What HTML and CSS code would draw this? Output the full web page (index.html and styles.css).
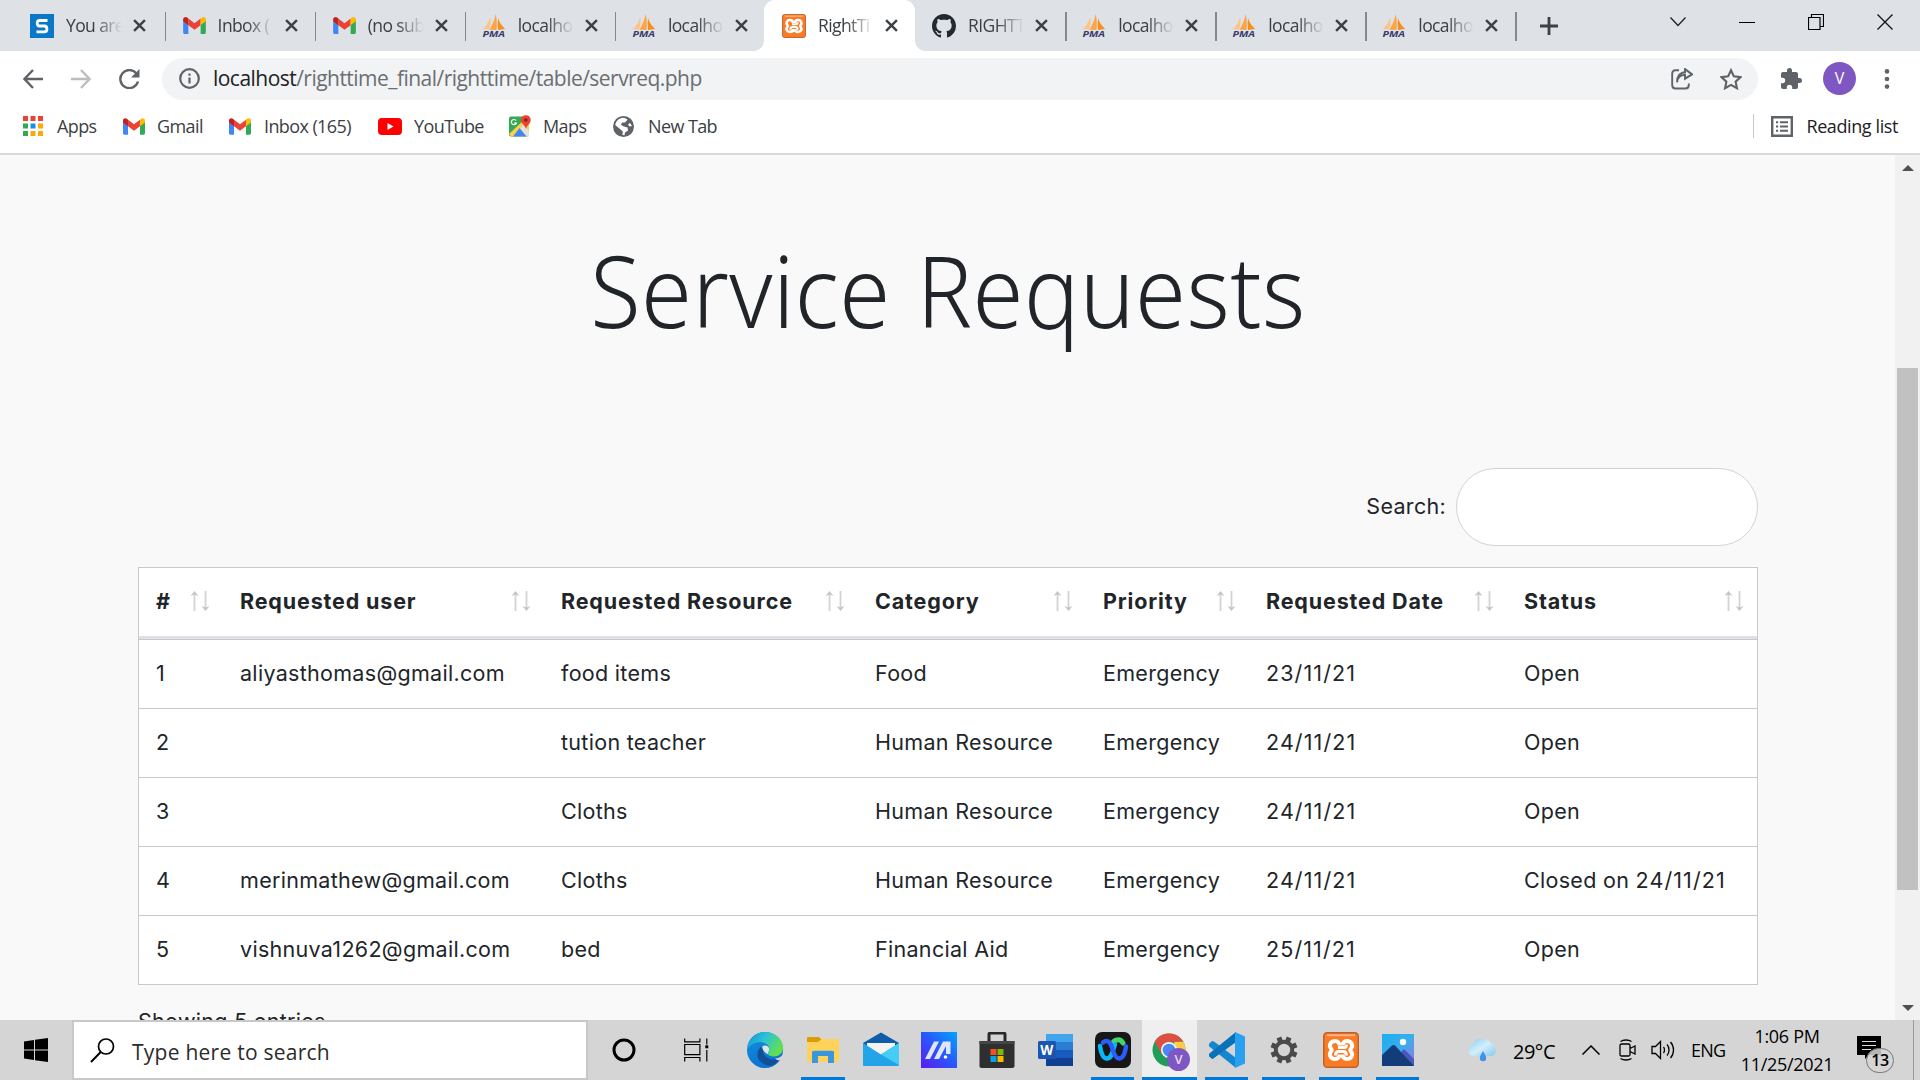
FILE: index.html
```html
<!DOCTYPE html>
<html lang="en">
<head>
<meta charset="utf-8">
<title>RightTime</title>
<link rel="stylesheet" href="styles.css">
</head>
<body>
<svg class="defs" aria-hidden="true">
  <defs>
    <linearGradient id="edgeTop" x1="0" y1="0" x2="1" y2=".5"><stop offset="0" stop-color="#0c8fd8"/><stop offset=".5" stop-color="#2cc3d5"/><stop offset="1" stop-color="#63e04e"/></linearGradient>
    <linearGradient id="edgeLow" x1="0" y1="0" x2=".6" y2="1"><stop offset="0" stop-color="#1491dc"/><stop offset="1" stop-color="#0a6fd0"/></linearGradient>
    <linearGradient id="armoury" x1="0" y1="1" x2="1" y2="0"><stop offset="0" stop-color="#5a1cf0"/><stop offset=".5" stop-color="#2b56fa"/><stop offset="1" stop-color="#02a5ff"/></linearGradient>
    <linearGradient id="cloud" x1="0" y1="0" x2="1" y2="1"><stop offset="0" stop-color="#86cdf2"/><stop offset=".5" stop-color="#d3effc"/><stop offset="1" stop-color="#82c6ef"/></linearGradient>
    <linearGradient id="photo" x1="0" y1="0" x2="1" y2="1"><stop offset="0" stop-color="#1aaef0"/><stop offset=".5" stop-color="#38aef0"/><stop offset="1" stop-color="#9a74dc"/></linearGradient>
  </defs>
  <symbol id="pma" viewBox="0 0 24 24"><path d="M8 3C7 8 4 12 1 15l6 .6C9 11 9 7 8 3z" fill="#fbc48a"/><path d="M13.500 0C13 6 10 11 7.500 15.800l7 .2C15 10 15 5 13.500 0z" fill="#fca448"/><path d="M16 4c1 4 4 8 7 11l-7 1c-.5-4-.5-8 0-12z" fill="#f78f1e"/><text x=".5" y="22.500" class="pma-word" textLength="22.500" lengthAdjust="spacingAndGlyphs">PMA</text></symbol>
  <symbol id="gmail" viewBox="0 0 24 18"><path d="M0 3v13.400C0 17.300.7 18 1.600 18H5.500V8z" fill="#4285f4"/><path d="M24 3v13.400c0 .9-.7 1.600-1.600 1.600h-3.900V8z" fill="#34a853"/><path d="M5.500 1.500 12 6.500l6.500-5V8.700L12 13.500 5.500 8.700z" fill="#ea4335"/><path d="M0 2.500C0 .3 2.500-.7 4.200.600L5.500 1.500V8.700L0 4.600z" fill="#c5221f"/><path d="M24 2.500c0-2.200-2.500-3.200-4.200-1.900l-1.300.9v7.200L24 4.600z" fill="#fbbc04"/></symbol>
  <symbol id="xampp" viewBox="0 0 36 36"><rect x=".7" y=".7" width="34.600" height="34.600" rx="3.500" fill="#fb7a24" stroke="#b9622a" stroke-width="1.400"/><path d="M4 2.300h28v1.900H4z" fill="#ffb588"/><path d="M15 15.500h6c2 0 2.500-1.500 2.500-3M12.500 23.500c0-2.500 1-4 3-4h5c2 0 3 1.500 3 4" fill="none" stroke="#fff" stroke-width="3"/><path d="M12 9c-4.500 0-6.500 4.500-4 7.500 1 1.200 1 1.800 0 3-2.500 3-.5 7.500 4 7.500 3 0 4.500-2 4.500-4.500M24 9c4.500 0 6.500 4.500 4 7.500-1 1.200-1 1.800 0 3 2.500 3 .5 7.500-4 7.500-3 0-4.500-2-4.500-4.500M12 9c3 0 4.500 2 4.500 4.500M24 9c-3 0-4.500 2-4.500 4.500" fill="none" stroke="#fff" stroke-width="4"/></symbol>
  <symbol id="github" viewBox="0 0 16 16"><path fill="#24292f" d="M8 0C3.580 0 0 3.580 0 8c0 3.540 2.290 6.530 5.470 7.590.4.070.55-.17.55-.38 0-.19-.01-.82-.01-1.490-2.010.37-2.530-.49-2.690-.94-.09-.23-.48-.94-.82-1.130-.28-.15-.68-.52-.01-.53.63-.01 1.080.58 1.230.82.72 1.210 1.870.87 2.330.66.07-.52.28-.87.51-1.070-1.780-.2-3.640-.89-3.640-3.950 0-.87.31-1.590.82-2.150-.08-.2-.36-1.020.08-2.120 0 0 .67-.21 2.200.82.640-.18 1.320-.27 2-.27s1.360.09 2 .27c1.530-1.040 2.200-.82 2.200-.82.44 1.100.16 1.920.08 2.120.51.56.82 1.270.82 2.150 0 3.070-1.870 3.750-3.650 3.950.29.25.54.73.54 1.480 0 1.070-.01 1.930-.01 2.200 0 .21.15.46.55.38A8 8 0 0 0 16 8c0-4.420-3.580-8-8-8z"/></symbol>
  <symbol id="close" viewBox="0 0 12 12"><path d="M1 1l10 10M11 1L1 11" stroke="#3c4043" stroke-width="2.200" fill="none"/></symbol>
  <symbol id="sort" viewBox="0 0 20 20"><path d="M4.500 20V2M15.500 0v18" stroke="#d3d3d3" stroke-width="1.800"/><path d="M4.500 0l4 5-4-1.500L.5 5zM15.500 20l4-5-4 1.500-4-1.500z" fill="#c4c4c4"/></symbol>
</svg>

<header class="browser">
  <div class="tabs">
    <div class="tab"><svg class="fav" viewBox="0 0 24 24"><path d="M0 0h24v24H0z" fill="#0a78c8"/><path d="M17.500 6.500H9.500c-3 0-3 5.500 0 5.500h5c3.200 0 3.200 5.800 0 5.800H6.500" fill="none" stroke="#fff" stroke-width="2.800"/></svg><span class="title">You are</span><svg class="x"><use href="#close"/></svg></div>
    <div class="tab"><svg class="fav gm"><use href="#gmail"/></svg><span class="title">Inbox (</span><svg class="x"><use href="#close"/></svg></div>
    <div class="tab"><svg class="fav gm"><use href="#gmail"/></svg><span class="title">(no sub</span><svg class="x"><use href="#close"/></svg></div>
    <div class="tab"><svg class="fav"><use href="#pma"/></svg><span class="title">localho</span><svg class="x"><use href="#close"/></svg></div>
    <div class="tab bare"><svg class="fav"><use href="#pma"/></svg><span class="title">localho</span><svg class="x"><use href="#close"/></svg></div>
    <div class="tab active"><svg class="fav"><use href="#xampp"/></svg><span class="title">RightTi</span><svg class="x"><use href="#close"/></svg></div>
    <div class="tab"><svg class="fav"><use href="#github"/></svg><span class="title">RIGHTT</span><svg class="x"><use href="#close"/></svg></div>
    <div class="tab"><svg class="fav"><use href="#pma"/></svg><span class="title">localho</span><svg class="x"><use href="#close"/></svg></div>
    <div class="tab"><svg class="fav"><use href="#pma"/></svg><span class="title">localho</span><svg class="x"><use href="#close"/></svg></div>
    <div class="tab"><svg class="fav"><use href="#pma"/></svg><span class="title">localho</span><svg class="x"><use href="#close"/></svg></div>
    <svg class="plus" viewBox="0 0 18 18"><path d="M9 0v18M0 9h18" stroke="#3c4043" stroke-width="2.800"/></svg>
    <div class="window-controls">
      <svg width="16" height="10" viewBox="0 0 16 10"><path d="M.5.5 8 8.500 15.500.5" fill="none" stroke="#222" stroke-width="1.300"/></svg>
      <svg width="16" height="10" viewBox="0 0 16 10"><path d="M0 5.500h16" stroke="#000"/></svg>
      <svg width="16" height="16" viewBox="0 0 16 16"><path d="M.5 3.500h11.500v12H.5zM3.500 3.500V.5h12v12H12" fill="none" stroke="#000" stroke-width="1.200"/></svg>
      <svg width="16" height="16" viewBox="0 0 16 16"><path d="M.5.5l15 15M15.500.5l-15 15" stroke="#111" stroke-width="1.300"/></svg>
    </div>
  </div>

  <div class="toolbar">
    <div class="nav">
      <svg width="20" height="20" viewBox="0 0 20 20"><path d="M20 10H2M10 1L1.500 10l8.500 9" fill="none" stroke="#5f6368" stroke-width="2.400"/></svg>
      <svg width="20" height="20" viewBox="0 0 20 20"><path d="M0 10h18M10 1l8.500 9-8.500 9" fill="none" stroke="#bbbdbf" stroke-width="2.400"/></svg>
      <svg width="21" height="20" viewBox="0 0 21 20"><path d="M17.500 4.600A9 9 0 1 0 19 12.500" fill="none" stroke="#5f6368" stroke-width="2.400"/><path d="M20.500 0v8.500H12z" fill="#5f6368"/></svg>
    </div>
    <div class="omnibox">
      <svg width="21" height="21" viewBox="0 0 21 21"><circle cx="10.500" cy="10.500" r="9.300" fill="none" stroke="#5f6368" stroke-width="2.200"/><path d="M10.500 9.500v6M10.500 5.500v2.200" stroke="#5f6368" stroke-width="2.200"/></svg>
      <span class="url"><b>localhost</b>/righttime_final/righttime/table/servreq.php</span>
      <svg width="22" height="22" viewBox="0 0 22 20" preserveAspectRatio="none"><path d="M8 2H4.500C2.500 2 1.200 3 1.200 5v10.500c0 2 1.300 3.200 3.300 3.200h10c2 0 3.300-1.200 3.300-3.200V14M6 13c.5-4 3-6.500 8-6.800V9.800L21 5.800 14 1v2.800C9 4 6 7.500 6 13z" fill="none" stroke="#5f6368" stroke-width="1.900"/></svg>
      <svg width="22" height="22" viewBox="1 1 20 19"><path d="M11 2.500l2.600 5.600 6.100.700-4.500 4.100 1.200 6-5.400-3-5.400 3 1.200-6-4.500-4.100 6.100-.700z" fill="none" stroke="#5f6368" stroke-width="1.900"/></svg>
    </div>
    <svg class="puzzle" width="22" height="22" viewBox="1 1 22 22"><path fill="#5f6368" d="M20.500 11H19V7a2 2 0 0 0-2-2h-4V3.500a2.500 2.500 0 0 0-5 0V5H4a2 2 0 0 0-2 2v3.800h1.500a2.700 2.700 0 0 1 0 5.400H2V20a2 2 0 0 0 2 2h3.800v-1.500a2.700 2.700 0 0 1 5.400 0V22H17a2 2 0 0 0 2-2v-4h1.500a2.500 2.500 0 0 0 0-5z"/></svg>
    <span class="avatar">V</span>
    <svg width="6" height="20" viewBox="0 0 6 20"><g fill="#5f6368"><circle cx="3" cy="2.400" r="2.300"/><circle cx="3" cy="10" r="2.300"/><circle cx="3" cy="17.600" r="2.300"/></g></svg>
  </div>

  <div class="bookmarks">
    <svg width="20" height="20" viewBox="0 0 20 20"><path d="M0 0h5v5H0zM7.500 0h5v5h-5zM15 0h5v5h-5z" fill="#ea4335"/><path d="M0 7.500h5v5H0zM0 15h5v5H0z" fill="#34a853"/><path d="M7.500 7.500h5v5h-5z" fill="#1a8cf0"/><path d="M15 7.500h5v5h-5zM7.500 15h5v5h-5zM15 15h5v5h-5z" fill="#fba904"/></svg><span class="w-apps">Apps</span>
    <svg width="22" height="17"><use href="#gmail"/></svg><span class="w-gmail">Gmail</span>
    <svg width="22" height="17"><use href="#gmail"/></svg><span class="w-inbox">Inbox (165)</span>
    <svg width="24" height="17" viewBox="0 0 24 17"><rect width="24" height="17" rx="4" fill="#f00"/><path d="M9.500 5v7l6-3.500z" fill="#fff"/></svg><span class="w-yt">YouTube</span>
    <svg width="22" height="22" viewBox="0 0 22 22"><rect y="1.500" width="20" height="20" rx="2" fill="#34a853"/><path d="M0 19 17 3l3 3v14l-2 1.500H2z" fill="#fbd04c"/><path d="M4 21.500 10.500 13l7 8.500z" fill="#4285f4"/><path d="M11 13l3-3 6 6v5.500h-2z" fill="#dfe3e8"/><path d="M17 14c-.5-4-5-5-5-9a4.800 4.800 0 0 1 9.700 0c0 4-4 5-4.700 9z" fill="#ea4335"/><circle cx="16.800" cy="5" r="1.800" fill="#8c1d14"/><path d="M7 5.500A2.600 2.600 0 1 0 7.400 8H5" fill="none" stroke="#fff" stroke-width="1.200"/></svg><span class="w-maps">Maps</span>
    <svg width="21" height="21" viewBox="0 0 21 21"><circle cx="10.500" cy="10.500" r="10.500" fill="#5f6368"/><path d="M10 1.800c2 .3 3.500 1 4.500 2L12 6.500H9L8 9l3 1.500 3.500 1 .5 3-3 2-.5 2.700-2-.3.3-3.400L7 13l-4.800-4C3 5 6 2 10 1.800zM17 7l2 3-2.500.5L15 8.500z" fill="#fff"/></svg><span>New Tab</span>
    <div class="reading"><svg width="22" height="21" viewBox="0 0 22 21"><path d="M1.200 1.200h19.600v18.600H1.200z" fill="none" stroke="#5f6368" stroke-width="2.400"/><path d="M5 6.200h2.200M9 6.200h8M5 10.500h2.200M9 10.500h8M5 14.800h2.200M9 14.800h8" stroke="#5f6368" stroke-width="2"/></svg><span>Reading list</span></div>
  </div>
</header>

<div class="viewport">
  <main class="page">
    <h1><span>Service Requests</span></h1>
    <label class="search"><span>Search:</span><input type="text"></label>
    <div class="grid">
      <div class="row head"><span>#<svg><use href="#sort"/></svg></span><span>Requested user<svg><use href="#sort"/></svg></span><span>Requested Resource<svg><use href="#sort"/></svg></span><span>Category<svg><use href="#sort"/></svg></span><span>Priority<svg><use href="#sort"/></svg></span><span>Requested Date<svg><use href="#sort"/></svg></span><span>Status<svg><use href="#sort"/></svg></span></div>
      <div class="row"><span>1</span><span class="mail">aliyasthomas@gmail.com</span><span>food items</span><span>Food</span><span>Emergency</span><span class="date">23/11/21</span><span>Open</span></div>
      <div class="row"><span>2</span><span></span><span>tution teacher</span><span>Human Resource</span><span>Emergency</span><span class="date">24/11/21</span><span>Open</span></div>
      <div class="row"><span>3</span><span></span><span>Cloths</span><span>Human Resource</span><span>Emergency</span><span class="date">24/11/21</span><span>Open</span></div>
      <div class="row"><span>4</span><span class="mail">merinmathew@gmail.com</span><span>Cloths</span><span>Human Resource</span><span>Emergency</span><span class="date">24/11/21</span><span>Closed on <span class="date">24/11/21</span></span></div>
      <div class="row"><span>5</span><span class="mail">vishnuva1262@gmail.com</span><span>bed</span><span>Financial Aid</span><span>Emergency</span><span class="date">25/11/21</span><span>Open</span></div>
    </div>
    <p class="info">Showing 5 entries</p>
  </main>
  <div class="scrollbar"><i class="up"></i><i class="thumb"></i><i class="down"></i></div>
</div>

<footer class="taskbar">
  <div class="start"><svg width="24" height="24" viewBox="0 0 24 24"><path d="M0 3.400 10 2v9.500H0zM11 1.800 24 0v11.500H11zM0 12.500h10V22L0 20.600zM11 12.500h13V24l-13-1.800z"/></svg></div>
  <div class="searchbox"><svg width="25" height="25" viewBox="0 0 25 25"><circle cx="16" cy="8.500" r="7.500" fill="none" stroke="#000" stroke-width="1.700"/><path d="M10.700 14 1 24" stroke="#000" stroke-width="1.900"/></svg><span>Type here to search</span></div>
  <div class="tools">
    <svg width="24" height="24" viewBox="0 0 24 24"><circle cx="12" cy="12" r="10" fill="none" stroke="#000" stroke-width="3"/></svg>
    <svg width="25" height="24" viewBox="0 0 25 24"><path d="M.7.500v3.300h15.200V.5M.7 6.500h15.200v10.200H.7zM.7 23.500v-4h15.200v4M22.800.500v6M22.800 12v11.500" fill="none" stroke="#000" stroke-width="1.200"/><path d="M21.300 7.300h3v3h-3z"/></svg>
  </div>
  <div class="apps">
    <div class="app"><svg viewBox="0 0 36 36"><circle cx="18" cy="18" r="18" fill="url(#edgeLow)"/><path d="M1 12C4 4 11 0 18 0c10 0 18 7 18 15.500 0 6-4.500 9-9 9-3.500 0-6-1.200-6-3 0-1.200 1.500-2 1.500-4.500 0-3.500-4-7-9.500-7C8 10 3 13 .3 17z" fill="url(#edgeTop)"/><path d="M14 15c-4 3-5 9-1 14 4 4.500 11 6.500 16 2 2-1.500 4-3.500 4.500-5-4 2-9 2-12.500 0-4-2.300-6-6-5-10z" fill="#124f96"/><path d="M15 15c2-2.500 7-1.500 7.300 2 .2 2.500-1.700 3-1.300 5.200-2.500-.7-5-3.200-6-7.200z" fill="#d9e6ea"/><path d="M28 26.500c2.500 0 5-1 8-4V36h-7c2.500-2 4.500-5 5-8-1.500.5-4 .5-6-1.500z" fill="#d5d5d5"/></svg></div>
    <div class="app open"><svg viewBox="0 0 36 36"><path d="M2 6c0-.6.4-1 1-1h11l3 3-2 5H2z" fill="#dc9c08"/><path d="M2 10h11l4-3h16c.6 0 1 .4 1 1v21c0 .6-.4 1-1 1H3c-.6 0-1-.4-1-1z" fill="#ffd25c"/><path d="M7 31V20.500c0-1 .7-1.700 1.700-1.700h18.600c1 0 1.700.7 1.700 1.700V31h-6v-7H13v7z" fill="#3a96dd"/></svg></div>
    <div class="app"><svg viewBox="0 0 36 36"><path d="M0 11 18 .500 36 11v4H0z" fill="#0f5da8"/><path d="M4 11h28v10L18 26 4 21z" fill="#f4f4f4"/><path d="M0 11l18 11.500L36 11v22c0 .6-.4 1-1 1H1c-.6 0-1-.4-1-1z" fill="#24a4e8"/><path d="M36 11v22L18 22.500z" fill="#46cdf6"/></svg></div>
    <div class="app"><svg viewBox="0 0 36 36"><path d="M0 0h36v36H0z" fill="url(#armoury)"/><path d="M4 27 13 9.500h5L9 27zM13 27l9-17.500h7.500V22H25v-8l-7 13z" fill="#dfe6ff"/><circle cx="24.500" cy="25" r="1.800" fill="#fff"/></svg></div>
    <div class="app"><svg viewBox="0 0 36 36"><path d="M10 11V2.500C10 1.500 10.500 1 11.500 1h13c1 0 1.500.5 1.500 1.500V11" fill="none" stroke="#292929" stroke-width="3"/><path d="M.5 9h35v25c0 1.200-.8 2-2 2h-31c-1.200 0-2-.8-2-2z" fill="#2f2f2f"/><path d="M.5 9h35v3H.5z" fill="#444"/><path d="M11.500 17h6v6h-6z" fill="#f25022"/><path d="M18.500 17h6v6h-6z" fill="#7fba00"/><path d="M11.500 24h6v6h-6z" fill="#00a4ef"/><path d="M18.500 24h6v6h-6z" fill="#ffb900"/></svg></div>
    <div class="app"><svg viewBox="0 0 36 36"><path d="M9 2h27v8H9z" fill="#41a5ee"/><path d="M9 10h27v8H9z" fill="#2b7cd3"/><path d="M9 18h27v8H9z" fill="#185abd"/><path d="M9 26h27v8H9z" fill="#103f91"/><rect x="1" y="9" width="18" height="18" rx="1.500" fill="#1a55b0"/><text x="3.300" y="23" class="word-w" textLength="13" lengthAdjust="spacingAndGlyphs">W</text></svg></div>
    <div class="app open"><svg viewBox="0 0 36 36"><rect width="36" height="36" rx="7" fill="#171717"/><path d="M17 12c2-4.500 8-6 11-1" fill="none" stroke="#43d66a" stroke-width="5" stroke-linecap="round"/><path d="M5 14c1 7 3 12.500 7 12.500 5 0 6-9 8-14" fill="none" stroke="#08b8f5" stroke-width="4.500" stroke-linecap="round"/><path d="M8 10.500c4-3.500 7.500-.5 9 5s3.500 11 7 11c4 0 6-5 7-12" fill="none" stroke="#2b5cff" stroke-width="4.500" stroke-linecap="round"/></svg></div>
    <div class="app open current"><svg viewBox="0 0 38 38"><circle cx="17" cy="17" r="16.500" fill="#1e9e57"/><path d="M2.700 8.800A16.500 16.500 0 0 1 31.300 8.800L17 9l-7.500 12z" fill="#dd4f43"/><path d="M31.300 8.800A16.500 16.500 0 0 1 17 33.500l7-12.500L22 9z" fill="#ffcd42"/><circle cx="17" cy="17" r="8" fill="#f1f1f1"/><circle cx="17" cy="17" r="6.300" fill="#4889f4"/><circle cx="26.500" cy="26.500" r="11.500" fill="#7e57c2"/><text x="26.500" y="31" text-anchor="middle" class="badge-v">V</text></svg></div>
    <div class="app open"><svg viewBox="0 0 36 36"><path d="M0 23.500 27 0v10L3.300 27z" fill="#0065a9"/><path d="M3 9 .3 11.500c-.5 1-.5 2 0 3L27 36V26L5 9.500z" fill="#1487d0"/><path d="M27 0v9.500L3.500 27 .3 24.500c-.5-1-.5-2 0-3z" fill="#0a72bb"/><path d="M26 0l10 4.500v27L26 36z" fill="#2aa0f2"/></svg></div>
    <div class="app open"><svg viewBox="0 0 36 36"><g fill="#4a4a4a" transform="rotate(22.500 18 18)"><path id="tooth" d="M15.500 4.500h5v6h-5z"/><use href="#tooth" transform="rotate(45 18 18)"/><use href="#tooth" transform="rotate(90 18 18)"/><use href="#tooth" transform="rotate(135 18 18)"/><use href="#tooth" transform="rotate(180 18 18)"/><use href="#tooth" transform="rotate(225 18 18)"/><use href="#tooth" transform="rotate(270 18 18)"/><use href="#tooth" transform="rotate(315 18 18)"/></g><circle cx="18" cy="18" r="8.200" fill="none" stroke="#4a4a4a" stroke-width="4"/></svg></div>
    <div class="app open"><svg><use href="#xampp"/></svg></div>
    <div class="app open"><svg viewBox="0 0 36 36"><path d="M2 2h32v32H2z" fill="url(#photo)"/><circle cx="23" cy="10" r="3.200" fill="#fff"/><path d="M15 27l9-10 10 10v7H15z" fill="#4c56bd"/><path d="M2 23l10-9.500c1-.8 2-.8 3 0L34 34H2z" fill="#123d78"/></svg></div>
  </div>
  <div class="tray">
    <svg width="31" height="24" viewBox="0 0 31 24"><path d="M7 18a6 6 0 0 1-1-11.800C8 1 12.500 0 15.500 1.500 19 0 23 2 24 6a6.200 6.200 0 0 1 .5 12z" fill="url(#cloud)"/><path d="M16 13c-1.500 3-3.200 4.500-3.200 7a3.200 3.200 0 0 0 6.400 0c0-2.500-1.700-4-3.200-7z" fill="#3f92e8"/></svg>
    <span class="temp">29°C</span>
    <svg width="18" height="10" viewBox="0 0 18 10"><path d="M.5 9.500 9 1l8.500 8.500" fill="none" stroke="#000" stroke-width="1.500"/></svg>
    <svg class="cam" width="17" height="22" viewBox="0 0 17 22"><path d="M1 6.500C1 5.500 1.500 5 2.500 5h7c1 0 1.500.5 1.500 1.500v9c0 1-.5 1.500-1.500 1.500h-7C1.500 17 1 16.500 1 15.500zM11 9.500l5-2.500v8l-5-2.500M1.500 2.500c3-2 8-2 11 0M1.500 19.500c3 2 8 2 11 0" fill="none" stroke="#000" stroke-width="1.300"/></svg>
    <svg class="vol" width="24" height="20" viewBox="0 0 24 20"><path d="M1 6.500h3.500L9.500 1.500v17l-5-5H1zM12.500 7c1.300 1.500 1.300 4.500 0 6M16 4.500c2.700 3 2.700 8 0 11M19.500 2c4 4.500 4 11.500 0 16" fill="none" stroke="#000" stroke-width="1.300"/></svg>
    <span class="lang">ENG</span>
    <div class="clock"><span>1:06 PM</span><span>11/25/2021</span></div>
    <div class="notes"><svg width="24" height="24" viewBox="0 0 24 24"><path d="M0 0h24v19h-12l-4 4v-4H0z"/><path d="M5 5.500h14M5 9.500h14M5 13.500h9" stroke="#ddd" stroke-width="1.200"/></svg><b>13</b></div>
    <i class="desk"></i>
  </div>
</footer>
</body>
</html>
```
FILE: styles.css
```css
*{box-sizing:border-box}
body{margin:0;width:1920px;height:1080px;overflow:hidden;display:flex;flex-direction:column;font-family:"Open Sans","Noto Sans",sans-serif;color:#212529;background:#f9f9f9;white-space:nowrap}
svg{display:block;flex:none}
.defs{position:absolute;width:0;height:0}
.pma-word{font:italic 700 8.500px "Open Sans",sans-serif;fill:#3b3a6b}
.word-w{font:700 14px "Open Sans",sans-serif;fill:#fff}
.badge-v{font:600 13px "Open Sans",sans-serif;fill:#e5dcf3}

/* browser chrome */
.browser{height:155px;flex:none;background:#fff;border-bottom:2px solid #dadada;display:flex;flex-direction:column}
.tabs{height:51px;background:#dee1e6;display:flex;align-items:center;padding-left:14px}
.tab{width:150.1px;height:51px;display:flex;align-items:center;padding-left:17.500px;position:relative;flex:none}
.tab:first-child{padding-left:16px}
.tab::after{content:"";position:absolute;right:-2px;top:12px;width:1.500px;height:29px;background:#85888c}
.tab.bare::after,.tab.active::after{display:none}
.tab.active{background:#fff;border-radius:11px 11px 0 0}
.tab.active::before{content:"";position:absolute;left:-10px;right:-10px;bottom:0;height:10px;background:radial-gradient(circle at 0 0,transparent 9.500px,#fff 10px) left/10px 10px no-repeat,radial-gradient(circle at 100% 0,transparent 9.500px,#fff 10px) right/10px 10px no-repeat}
.fav{width:24px;height:24px}
.gm{width:23px;height:17px;margin:0 0 0 1px}
.title{width:57px;margin:-1px 10px 0 12px;overflow:hidden;font-size:17.500px;letter-spacing:-.6px;line-height:26px;color:#3c4043;-webkit-mask-image:linear-gradient(90deg,#000 50%,transparent 98%);mask-image:linear-gradient(90deg,#000 50%,transparent 98%)}
.x{width:13px;height:13px}
.plus{width:18px;height:18px;margin-left:25px}
.window-controls{margin-left:auto;display:flex;align-items:center;gap:53px;padding:0 27px 8px 0}
.toolbar{height:55px;display:flex;align-items:center}
.nav{display:flex;align-items:center;gap:28px;padding-left:23px;width:162px}
.omnibox{width:1596px;height:42px;border-radius:21px;background:#f1f3f4;display:flex;align-items:center;padding:0 16px 0 17px;gap:27px}
.url{flex:1;margin:-2px 0 0 -14px;font-size:21px;letter-spacing:-.53px;line-height:28px;color:#6b6e72}
.url b{font-weight:400;color:#202124}
.puzzle{margin-left:22px}
.avatar{width:33px;height:33px;border-radius:50%;background:#7e57c2;color:#fff;font-size:16px;line-height:33px;text-align:center;margin:0 28px 0 21px}
.bookmarks{height:40px;display:flex;align-items:center;font-size:18px;letter-spacing:-.6px;color:#3c4043;padding:0 22px 0 23px}
.bookmarks span{margin-left:15px;line-height:26px;margin-top:-1px}
.bookmarks .w-apps{margin-left:14px;width:66px}
.bookmarks .w-gmail{width:72px;margin-left:12px}
.bookmarks .w-inbox{width:114px;margin-left:13px}
.bookmarks .w-yt{width:95px;margin-left:12px}
.bookmarks .w-maps{width:70px;margin-left:12px}
.bookmarks .w-maps+svg+span{margin-left:14px}
.reading{margin-left:auto;display:flex;align-items:center;border-left:1px solid #c6c8cb;padding-left:17px;height:24px;letter-spacing:-.4px;color:#202124}
.reading span{margin-left:13px}

/* page */
.viewport{height:865px;flex:none;display:flex;overflow:hidden}
.page{width:1895px;flex:none;padding:66px 137px 0 138px;font-family:Inter,Roboto,sans-serif;font-size:21.500px;letter-spacing:.3px}
h1{margin:0;height:136px;display:flex;justify-content:center;font:300 100px/136px "Noto Sans","Open Sans",sans-serif;letter-spacing:.5px;word-spacing:2px}
h1 span{display:block;transform:scaleX(.922)}
.search{display:flex;align-items:center;justify-content:flex-end;margin-top:111px;height:78px}
.search span{padding-bottom:2px}
.search input{width:302px;height:78px;border:1px solid #ced4da;border-radius:39px;margin-left:10px;background:#fff}
.grid{margin-top:21px;border:1px solid #c9c9c9;background:#fff}
.row{display:grid;grid-template-columns:84px 321px 314px 228px 163px 258px 250px;height:69px;border-bottom:1px solid #c9c9c9;align-items:center}
.row:last-child{border-bottom:0;height:68px}
.row>span{padding-left:17px;padding-bottom:3px}
.row .date{letter-spacing:1.100px}
.head{height:72px;border-bottom:1px solid #c9c9c9;font-weight:700;letter-spacing:.85px;box-shadow:inset 0 -3px #dee2e6}
.head>span{display:flex;align-items:center;justify-content:space-between;padding-right:13px;padding-bottom:6px}
.head svg{width:20px;height:20px}
.info{margin:22px 0 0;line-height:28px}
.scrollbar{width:25px;background:#f1f1f1;display:flex;flex-direction:column;align-items:center}
.up,.down{width:0;border:6px solid transparent}
.up{border-top:0;border-bottom-color:#505050;margin-top:10px}
.thumb{width:21px;height:522px;background:#c1c1c1;margin:197px 0 0 0}
.down{border-bottom:0;border-top-color:#505050;margin-top:115px}

/* taskbar */
.taskbar{height:60px;flex:none;background:#d5d5d5;display:flex;align-items:center}
.start{width:72px;padding-left:24px}
.searchbox{width:516px;height:60px;background:#fff;border:2px solid #c8c8c8;display:flex;align-items:center;padding-left:16px;font-size:21px;letter-spacing:.25px;color:#2b2b2b}
.searchbox span{margin-left:17px;line-height:30px;padding-top:3px}
.tools{width:148px;display:flex;align-items:center;padding-left:24px;gap:48px}
.apps{display:flex;height:60px}
.app{width:57px;height:60px;display:flex;align-items:center;justify-content:center;position:relative}
.app:nth-child(-n+6){width:58px}
.app svg{width:36px;height:36px}
.app.open::after{content:"";position:absolute;left:7px;right:7px;bottom:0;height:3px;background:#0078d7}
.app.current{background:linear-gradient(#efefef,#efefef) center/55px 100% no-repeat}
.app.current::after{left:1px;right:1px}
.app.current svg{width:38px;height:38px;margin-top:4px;margin-left:3px}
.tray{flex:1;display:flex;align-items:center;padding-left:41px;color:#000;font-size:18px}
.temp{width:44px;margin:2px 25px 0 15px;font-size:20px;letter-spacing:-.5px}
.cam{margin-left:19px}
.vol{margin-left:15px}
.lang{width:35px;margin-left:16px;letter-spacing:-.8px}
.clock{width:94px;margin-left:14px;display:flex;flex-direction:column;align-items:center;line-height:28px;letter-spacing:-.3px}
.notes{position:relative;margin-left:23px;margin-top:-4px}
.notes b{position:absolute;left:9px;top:12px;width:28px;height:25px;border:1px solid #777;border-radius:13px;background:#d5d5d5d9;font-size:16px;font-weight:600;line-height:23px;text-align:center;letter-spacing:-.5px}
.desk{width:1px;height:60px;background:#999;margin-left:auto;margin-right:6px}
```
